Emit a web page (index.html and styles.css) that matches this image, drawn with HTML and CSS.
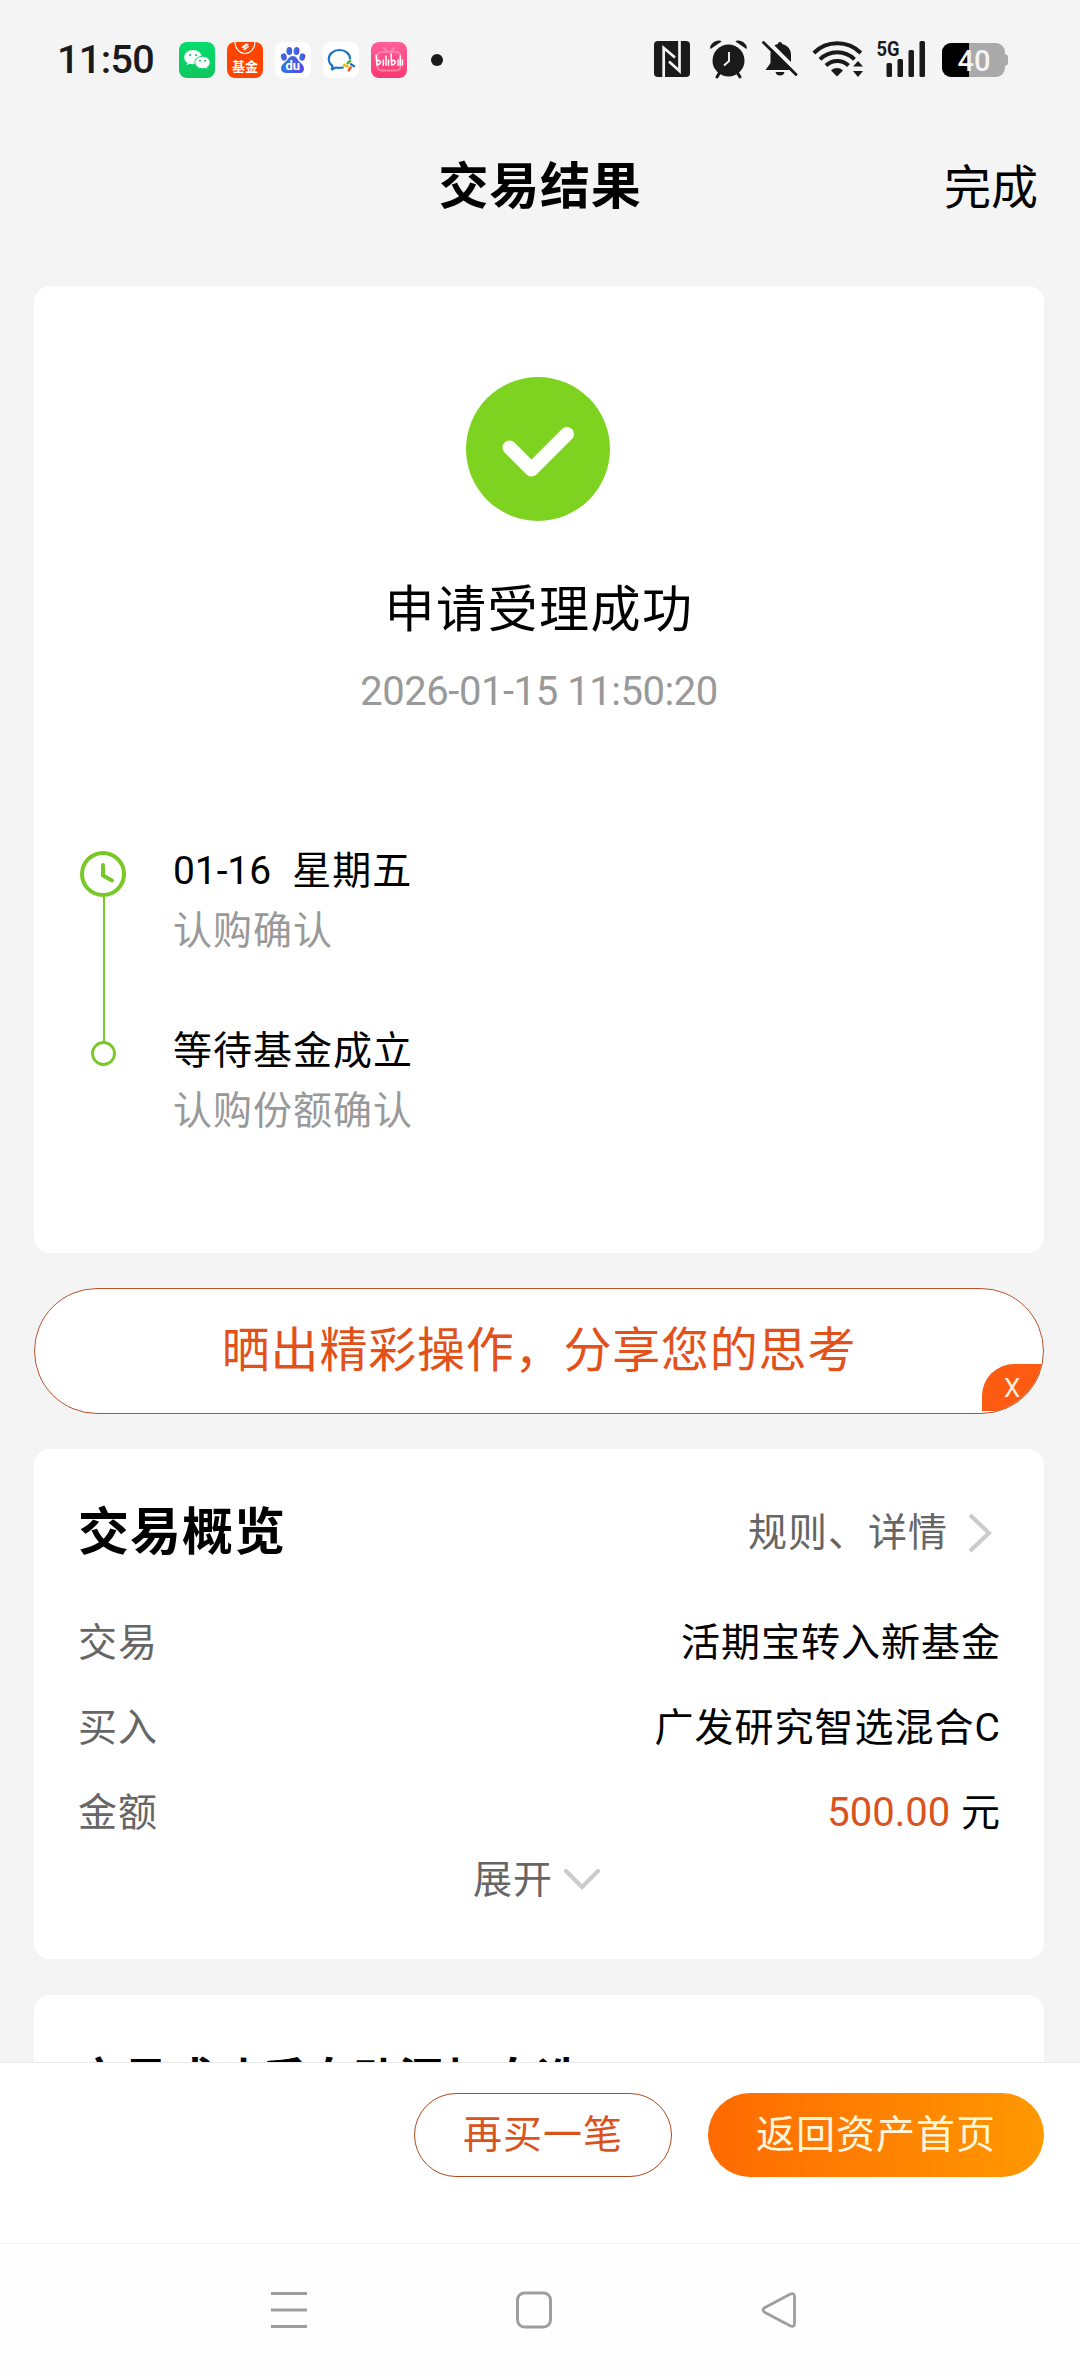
FILE: index.html
```html
<!DOCTYPE html>
<html lang="zh-CN">
<head>
<meta charset="utf-8">
<title>交易结果</title>
<link rel="stylesheet" href="styles.css">
</head>
<body>
<div class="screen">
  <header class="status">
    <div class="status-left">
      <span class="clock">11:50</span>
      <div class="apps">
        <svg class="app" viewBox="0 0 36 36">
          <defs><linearGradient id="wx" x2="0" y2="1"><stop stop-color="#03dc6c"/><stop offset="1" stop-color="#10c65f"/></linearGradient></defs>
          <rect width="36" height="36" rx="8" fill="url(#wx)"/>
          <path d="M14 8c-5 0-8.800 3.200-8.800 7.200 0 2.300 1.200 4.200 3.100 5.500l-.8 2.600 3-1.600c1.100.3 2.200.5 3.500.5 5 0 8.800-3.100 8.800-7S19 8 14 8z" fill="#fff"/>
          <path d="M23.500 14.300c-4.300 0-7.600 2.800-7.600 6.200s3.300 6.200 7.600 6.200c1 0 2-.2 2.900-.5l2.600 1.400-.7-2.300c1.800-1.200 2.800-2.900 2.800-4.800 0-3.400-3.300-6.200-7.600-6.200z" fill="#fff" stroke="#08d267" stroke-width="1"/>
          <g fill="#08cc65"><circle cx="11" cy="13" r="1.100"/><circle cx="17" cy="13" r="1.100"/><circle cx="21" cy="18.700" r="1"/><circle cx="26" cy="18.700" r="1"/></g>
        </svg>
        <svg class="app" viewBox="0 0 36 36">
          <rect width="36" height="36" rx="8" fill="#ff4400"/>
          <path d="M8 0a10 11.500 0 0 0 20 0" fill="none" stroke="#fff" stroke-width="1.100"/>
          <path d="M14 5.500l5-4 3 .8-5 3.700zM15.500 7.500l5.500-3.700 1.300.7-4.500 3.700z" fill="#fff"/>
          <text class="fund-label" x="18" y="28.500" text-anchor="middle">基金</text>
        </svg>
        <svg class="app" viewBox="0 0 36 36">
          <defs><linearGradient id="bd" x2="1"><stop stop-color="#2e7ae6"/><stop offset="1" stop-color="#5848e0"/></linearGradient></defs>
          <rect width="36" height="36" rx="8" fill="#fff"/>
          <g fill="url(#bd)"><ellipse cx="8.800" cy="15" rx="2.900" ry="3.700" transform="rotate(-12 8.800 15)"/><ellipse cx="14.300" cy="9" rx="2.900" ry="4"/><ellipse cx="21.500" cy="9" rx="2.900" ry="4" transform="rotate(8 21.500 9)"/><ellipse cx="27.300" cy="15" rx="2.900" ry="3.700" transform="rotate(12 27.300 15)"/>
          <path d="M18 14c-3.500 0-4.600 3-7 5.300-2.600 2.300-5 4-5 7 0 3 2.300 4.700 5 4.700h14c2.700 0 4-1.800 4-4.500 0-3-2.300-4.600-4.500-6.700C22.300 17.500 21.500 14 18 14z"/></g>
          <text class="du-label" x="17.800" y="28.300" text-anchor="middle">du</text>
        </svg>
        <svg class="app" viewBox="0 0 36 36">
          <rect width="36" height="36" rx="8" fill="#fff"/>
          <path d="M27 16.500C27 12 22.500 8 16.500 8S5.800 12 5.800 17c0 3 1.400 5.300 3.700 7l-.6 3.500 4-2c1.500.4 4.500.6 7 0" fill="none" stroke="#1b74c5" stroke-width="2.200" stroke-linejoin="round" stroke-linecap="round"/>
          <path d="M27 19l-2.300 2.200" stroke="#4cb040" stroke-width="2.600" stroke-linecap="round"/>
          <path d="M31 24.200l-3-2" stroke="#1b74c5" stroke-width="2.400" stroke-linecap="round"/>
          <path d="M25.800 28.300l1.800-2.800" stroke="#f0592b" stroke-width="2.600" stroke-linecap="round"/>
          <path d="M21 22.800l3.500 1.600" stroke="#fbb500" stroke-width="2.400" stroke-linecap="round"/>
        </svg>
        <svg class="app" viewBox="0 0 36 36">
          <defs><linearGradient id="bl" x2="0" y2="1"><stop stop-color="#ff609b"/><stop offset="1" stop-color="#f93870"/></linearGradient></defs>
          <rect width="36" height="36" rx="8" fill="url(#bl)"/>
          <path d="M13 6l3 3M23 6l-3 3" stroke="#ff88b2" stroke-width="2" stroke-linecap="round"/>
          <rect x="6.500" y="10" width="23" height="18.500" rx="4" fill="none" stroke="#ff7fa8" stroke-width="2"/>
          <g fill="none" stroke="#fff" stroke-width="1.500" stroke-linecap="round"><path d="M5 13l1 10q4-1 3.500-3.500Q8 17.500 6 19M12.300 18v5.200M15 14v9.200M17.500 18v5.200M20 12l.7 11q4-1 3.500-3.500-1.500-2-3.700-.5M27 18v5.200M29.200 14v9.200M31.500 18v5"/></g>
        </svg>
        <span class="dot"></span>
      </div>
    </div>
    <svg class="status-right" width="356" height="60" viewBox="0 -10 356 60" fill="#1a1a1a">
      <rect x="0" y="1" width="36" height="36" rx="4"/>
      <path d="M9.700 37V8L21 17.500M25.500 1v30L15 21.500" fill="none" stroke="#f4f4f4" stroke-width="2.700"/>
      <circle cx="74.500" cy="20.500" r="16"/>
      <path d="M66 32l-3 5M83 32l3 5" stroke="#1a1a1a" stroke-width="3" stroke-linecap="round"/>
      <path d="M56.800 8A8 8 0 0 1 66.500 1.500z M92.200 8A8 8 0 0 0 82.500 1.500z" stroke="#1a1a1a" stroke-width="1.500" stroke-linejoin="round"/>
      <path d="M75 12v9l-5 4.500" fill="none" stroke="#f4f4f4" stroke-width="1.900"/>
      <path d="M126 2c1.300 0 2 .8 2 2 5.500 1.300 9 5 9 11v9l4 6h-29.500l5-7v-9c0-5.600 2.700-8.600 7.500-10 0-1.200.7-2 2-2z"/>
      <path d="M121.500 32h9c-.5 2.300-2 3.600-4.500 3.600s-4-1.300-4.500-3.600z"/>
      <path d="M111.500 -.5l34 34" stroke="#f4f4f4" stroke-width="4"/>
      <path d="M109.500 2.500l32.500 32" stroke="#1a1a1a" stroke-width="2.800" stroke-linecap="round"/>
      <g fill="none" stroke="#1a1a1a" stroke-width="4"><path d="M159.800 13a33.500 33.500 0 0 1 47 0M166 19.300a24.500 24.500 0 0 1 34.500 0M172 25.500a16 16 0 0 1 22.500 0"/></g>
      <path d="M183 36.500l-6-6a8.500 8.500 0 0 1 12 0z"/>
      <path d="M199 26.500h10l-5-5.500zM199 31h10l-5 6z"/>
      <text class="net" x="222.500" y="15.700" textLength="23" lengthAdjust="spacingAndGlyphs">5G</text>
      <rect x="232.500" y="23" width="5.500" height="14" rx="1.500"/><rect x="243.500" y="19" width="5.500" height="18" rx="1.500"/><rect x="254.500" y="10" width="5.500" height="27" rx="1.500"/><rect x="265.500" y="1" width="5.500" height="36" rx="1.500"/>
      <rect x="288" y="3" width="63" height="34" rx="9" fill="#aaa"/>
      <path d="M351 14c2 .3 3 1.500 3 3.500v5c0 2-1 3.200-3 3.500z" fill="#aaa"/>
      <path d="M315 3v34h-18a9 9 0 0 1-9-9V12a9 9 0 0 1 9-9z" fill="#000"/>
      <text class="batt" x="320" y="31" text-anchor="middle">40</text>
    </svg>
  </header>

  <div class="titlebar">
    <span></span>
    <h1>交易结果</h1>
    <a class="done">完成</a>
  </div>

  <main class="content">
    <section class="card result">
      <svg class="ok" viewBox="0 0 144 144"><circle cx="72" cy="72" r="72" fill="#7ed321"/><path d="M43.500 70.500L65.500 92.500 101 57" fill="none" stroke="#fff" stroke-width="14" stroke-linecap="round" stroke-linejoin="round"/></svg>
      <h2>申请受理成功</h2>
      <p class="time">2026-01-15 11:50:20</p>
      <div class="timeline">
        <svg class="track" width="46" height="216" viewBox="0 0 46 216" fill="none" stroke="#78c926">
          <circle cx="23" cy="23" r="21" stroke-width="4"/>
          <path d="M23 14v10.500l9 5" stroke-width="4" stroke-linecap="round" stroke-linejoin="round"/>
          <path d="M24 46v145" stroke-width="2"/>
          <circle cx="23.500" cy="202.500" r="11" stroke-width="2.800"/>
        </svg>
        <div class="steps">
          <div class="step"><p><span class="date">01-16</span>&nbsp; 星期五</p><p class="sub">认购确认</p></div>
          <div class="step"><p>等待基金成立</p><p class="sub">认购份额确认</p></div>
        </div>
      </div>
    </section>

    <section class="share">
      <span>晒出精彩操作，分享您的思考</span>
      <i class="close">X</i>
    </section>

    <section class="card overview">
      <div class="row head">
        <h3>交易概览</h3>
        <a class="more">规则、详情<svg width="24" height="40" viewBox="0 0 24 40"><path d="M2 2l19 18L2 38" fill="none" stroke="#ccc" stroke-width="4.200"/></svg></a>
      </div>
      <div class="row"><span class="key">交易</span><span>活期宝转入新基金</span></div>
      <div class="row"><span class="key">买入</span><span>广发研究智选混合C</span></div>
      <div class="row"><span class="key">金额</span><span><b>500.00</b> 元</span></div>
      <div class="expand">展开<svg width="36" height="22" viewBox="0 0 36 22"><path d="M2 2l16 16L34 2" fill="none" stroke="#ccc" stroke-width="4.200" stroke-linecap="round"/></svg></div>
    </section>

    <section class="card auto"><h4>交易成功后自动添加自选</h4></section>
  </main>

  <footer class="actions">
    <button class="btn again">再买一笔</button>
    <button class="btn home">返回资产首页</button>
  </footer>

  <nav class="sysnav">
    <svg width="36" height="38" viewBox="0 0 36 38"><path d="M0 2.500h36M0 19h36M0 35.500h36" stroke="#9e9e9e" stroke-width="3"/></svg>
    <svg width="36" height="38" viewBox="0 0 36 38"><rect x="1.500" y="2" width="33" height="34" rx="7" fill="none" stroke="#9e9e9e" stroke-width="3"/></svg>
    <svg width="36" height="38" viewBox="0 0 36 38"><path d="M29.500 3L4 16.500q-4 2.500 0 5L29.500 35q4 1.500 4-3V6q0-4.500-4-3z" fill="none" stroke="#9e9e9e" stroke-width="2.800"/></svg>
  </nav>
</div>
</body>
</html>
```
FILE: styles.css
```css
* { box-sizing: border-box; margin: 0; padding: 0; }

body {
  width: 1080px;
  height: 2376px;
  background: #f4f4f4;
  color: #000;
  font: 400 39px/50px Roboto, "Noto Sans CJK SC", sans-serif;
}

svg { display: block; flex: none; }

.screen {
  display: flex;
  flex-direction: column;
  height: 2376px;
  overflow: hidden;
}

/* Status bar */
.status {
  display: flex;
  justify-content: space-between;
  height: 120px;
  padding: 0 70px 0 57px;
  align-items: center;
}
.status-left { display: flex; align-items: center; }
.clock { width: 122px; font-size: 39.500px; font-weight: 500; color: #1a1a1a; letter-spacing: -.6px; }
.apps { display: flex; align-items: center; gap: 12px; }
.app { width: 36px; height: 36px; }
.dot { width: 12px; height: 12px; margin-left: 12px; border-radius: 50%; background: #1a1a1a; }
.fund-label { font: 700 13px "Noto Sans CJK SC", sans-serif; fill: #fff; }
.du-label { font: 700 13px Roboto, sans-serif; fill: #fff; }
.net { font: 700 21px Roboto, sans-serif; }
.batt { font: 500 29px Roboto, sans-serif; fill: #f4f4f4; }

/* Page title */
.titlebar {
  display: grid;
  grid-template-columns: 1fr auto 1fr;
  align-items: center;
  height: 166px;
  padding: 0 42px 32px;
}
.titlebar h1 { font-size: 50px; font-weight: 700; letter-spacing: .8px; line-height: 60px; }
.done { justify-self: end; font-size: 47px; line-height: 60px; padding-top: 1px; }

/* Scrolling content */
.content {
  display: flex;
  flex-direction: column;
  gap: 35px;
  height: 1776px;
  padding: 0 36px 0 34px;
  overflow: hidden;
}
.card { flex: none; border-radius: 16px; background: #fff; }

.result { height: 967px; padding: 91px 46px 0; }
.ok { width: 144px; height: 144px; margin: 0 auto; position: relative; left: -1px; }
.result h2 { margin-top: 59px; text-align: center; font-size: 50px; font-weight: 400; line-height: 60px; letter-spacing: 1.500px; }
.time { margin-top: 27px; text-align: center; font-size: 40px; color: #999; letter-spacing: -.45px; }
.timeline { display: flex; gap: 47px; margin-top: 124px; }
.track { margin-top: 10px; }
.steps { display: flex; flex-direction: column; gap: 60px; }
.step p { line-height: 60px; letter-spacing: 1px; }
.step .date { letter-spacing: -.1px; }
.step .sub { color: #999; }

.share {
  position: relative;
  display: flex;
  flex: none;
  align-items: center;
  justify-content: center;
  height: 126px;
  border: 1px solid #b8532a;
  border-radius: 63px;
  background: #fff;
  color: #e2511a;
  font-size: 48px;
  letter-spacing: .8px;
  overflow: hidden;
}
.close {
  position: absolute;
  right: 0;
  bottom: 2px;
  width: 61px;
  height: 47px;
  padding-left: 22px;
  border-top-left-radius: 32px;
  background: #fd5a12;
  color: #fff0dc;
  font-size: 26px;
  font-style: normal;
  line-height: 48px;
}

.overview { height: 510px; padding: 41px 43px 0 44px; letter-spacing: 1px; }
.row { display: flex; align-items: center; justify-content: space-between; height: 85px; }
.head { height: 86px; margin-bottom: 24px; }
.row h3 { font-size: 51px; font-weight: 700; line-height: 60px; }
.more { display: flex; align-items: center; gap: 20px; margin-right: 9px; color: #666; }
.key { color: #666; }
.row b { font-weight: 400; font-size: 40px; color: #d9531e; letter-spacing: 0; }
.expand { display: flex; align-items: center; justify-content: center; gap: 11px; height: 50px; padding-right: 6px; color: #666; }

.auto { height: 140px; margin-top: 1px; padding: 56px 43px 0; }
.auto h4 { font-size: 45px; line-height: 60px; font-weight: 700; letter-spacing: 1px; }

/* Bottom actions */
.actions {
  display: flex;
  justify-content: flex-end;
  align-items: flex-start;
  gap: 36px;
  height: 181px;
  padding: 30px 36px 0;
  border-top: 1px solid #e8e8e8;
  background: #fff;
}
.btn {
  height: 84px;
  border: 0;
  border-radius: 42px;
  font: inherit;
  letter-spacing: 1px;
}
.again { width: 258px; border: 1px solid #b04a20; background: #fff; color: #d9531e; }
.home { width: 336px; background: linear-gradient(90deg, #ff6a00, #ff9800); color: #fff6dc; }

.sysnav {
  display: flex;
  gap: 209px;
  height: 133px;
  padding: 47px 0 0 271px;
  border-top: 1px solid #f2f2f2;
  background: #fefefe;
}
```
